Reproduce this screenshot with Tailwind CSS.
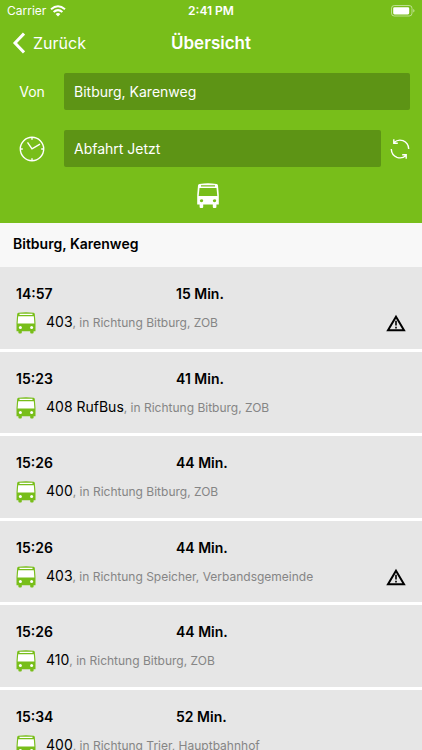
<!DOCTYPE html>
<html lang="de">
<head>
<meta charset="utf-8">
<meta name="viewport" content="width=device-width, initial-scale=1">
<title>Übersicht</title>
<script src="https://cdn.jsdelivr.net/npm/@tailwindcss/browser@4"></script>
</head>
<body class="flex h-screen flex-col overflow-hidden bg-white font-[Inter,'Liberation_Sans',sans-serif] text-black">
<svg class="hidden" aria-hidden="true">
  <symbol id="bus" viewBox="0 0 22 26">
    <path fill-rule="evenodd" fill="currentColor" d="M2.400 1Q11-.4 19.600 1Q20.900 1.200 21 2.400L21.800 12V21.600H19.400V24Q19.400 25 18.400 25H16.800Q15.800 25 15.800 24V21.600H6.200V24Q6.200 25 5.200 25H3.600Q2.600 25 2.600 24V21.600H.2V12L1 2.400Q1.100 1.200 2.400 1ZM4 2.200V3.500H18V2.200ZM2.500 5L1.700 13H20.300L19.500 5ZM4.500 16.200A1.700 1.500 0 1 0 4.510 19.200A1.700 1.500 0 1 0 4.500 16.200ZM17.500 16.200A1.700 1.500 0 1 0 17.510 19.200A1.700 1.500 0 1 0 17.500 16.200Z"/>
  </symbol>
  <symbol id="bus-line" viewBox="0 0 20 22">
    <path fill="#fff" d="M2 1H18L18.700 12H1.300Z"/>
    <path fill="currentColor" fill-rule="evenodd" d="M2.400.7Q10-.4 17.600.7Q18.700.9 18.800 2L19.500 11V19.200H17.600V20.500Q17.600 21.500 16.600 21.500H15.200Q14.200 21.500 14.200 20.500V19.200H5.800V20.500Q5.800 21.500 4.800 21.500H3.400Q2.400 21.500 2.400 20.500V19.200H.5V11L1.200 2Q1.300.9 2.400.7ZM3.500 1.800V3H16.500V1.800ZM2.200 4.200L1.600 11.400H18.400L17.800 4.200Z"/>
    <circle cx="4.400" cy="15.500" r="1.500" fill="#fff"/><circle cx="15.600" cy="15.500" r="1.500" fill="#fff"/>
  </symbol>
  <symbol id="warning" viewBox="0 0 20 18">
    <path d="M10 2.800L18 16.200H2Z" fill="none" stroke="currentColor" stroke-width="2"/>
    <path d="M10 6.800V11.600M10 12.800V14.600" stroke="currentColor" stroke-width="1.600"/>
  </symbol>
</svg>

<header class="shrink-0 bg-[#78be1a] text-white">
  <div class="grid h-[22px] grid-cols-3 items-center px-[7px] text-xs">
    <div class="flex items-center gap-1">
      <span>Carrier</span>
      <svg class="h-3 w-4" viewBox="0 0 16 12" fill="none" stroke="currentColor" stroke-width="2" aria-hidden="true"><path d="M1 4.200Q8-1.800 15 4.200M3.600 7Q8 3.200 12.400 7"/><path d="M5.600 9Q8 7 10.400 9L8 11.600Z" fill="currentColor" stroke="none"/></svg>
    </div>
    <span class="text-center font-semibold">2:41 PM</span>
    <svg class="h-3 w-[26px] justify-self-end" viewBox="0 0 26 12" aria-hidden="true"><rect x="2.500" y=".5" width="20.500" height="10.500" rx="2.800" fill="none" stroke="#fff" stroke-opacity=".5"/><rect x="4.200" y="2.200" width="16" height="7.200" rx="1.300" fill="#fff"/><path d="M24.300 4V7.600Q25.500 7 25.500 5.800T24.300 4Z" fill="#fff" fill-opacity=".6"/></svg>
  </div>
  <nav class="grid h-[42px] grid-cols-[1fr_auto_1fr] items-center px-3">
    <button type="button" class="flex items-center gap-2 text-base">
      <svg class="h-[22px] w-[13px]" viewBox="0 0 13 22" fill="none" stroke="currentColor" stroke-width="3" aria-hidden="true"><path d="M12 1.500L3 11L12 20.500"/></svg>
      Zurück
    </button>
    <h1 class="text-[17px] leading-6 font-semibold">Übersicht</h1>
  </nav>
  <form class="grid grid-cols-[64px_1fr] gap-y-5 pt-[9px] pb-[14px] text-sm">
    <label for="from" class="self-center text-center">Von</label>
    <div class="pr-3"><input id="from" type="text" value="Bitburg, Karenweg" class="block h-[37px] w-full rounded-xs bg-[#5d9415] px-[10px] pb-px text-white outline-none"></div>
    <label for="time" aria-label="Zeit" class="justify-self-center self-center">
      <svg class="size-[26px]" viewBox="0 0 26 26" fill="none" stroke="currentColor" stroke-width="1.400" aria-hidden="true"><circle cx="13" cy="13" r="11.700"/><path d="M13 1.500V3.800M13 22.200V24.500M1.500 13H3.800M22.200 13H24.500M8.500 6.300L13 12.800L21 8.200"/></svg>
    </label>
    <div class="flex items-center">
      <input id="time" type="text" value="Abfahrt Jetzt" class="block h-[37px] min-w-0 flex-1 rounded-xs bg-[#5d9415] px-[10px] pb-px text-white outline-none">
      <button type="button" aria-label="Aktualisieren" class="flex w-[41px] items-center justify-center pr-1">
        <svg class="size-5" viewBox="0 0 20 20" fill="none" stroke="currentColor" stroke-width="1.400" aria-hidden="true"><path d="M4 3.600Q8-.1 13 1.700Q18.500 3.900 18.700 10M16 16.400Q12 20.100 7 18.300Q1.500 16.100 1.300 10M3.800.3V4.200H7.800M16.200 19.700V15.800H12.200"/></svg>
      </button>
    </div>
    <button type="button" aria-label="Bus" class="col-span-2 justify-self-center pr-1.5"><svg class="-mt-1 h-[26px] w-[22px]" aria-hidden="true"><use href="#bus"/></svg></button>
  </form>
</header>

<main class="flex min-h-0 flex-1 flex-col">
  <h2 class="shrink-0 bg-[#f8f8f8] px-[13px] pt-2.5 pb-[13px] text-sm leading-[21px] font-semibold">Bitburg, Karenweg</h2>
  <ul class="flex min-h-0 flex-1 flex-col gap-[3px] overflow-y-auto [scrollbar-width:none] *:grid *:shrink-0 *:grid-cols-[160px_1fr_20px] *:gap-y-[7px] *:bg-[#e6e6e6] *:px-4 *:pt-[17px] *:odd:pb-[14px] *:even:pb-[13px]">
    <li>
      <time class="text-sm leading-5 font-semibold">14:57</time><strong class="col-span-2 text-sm leading-5 font-semibold">15 Min.</strong>
      <div class="col-span-2 flex items-center gap-2.5"><svg class="h-[22px] w-5 text-[#78be1a]" aria-hidden="true"><use href="#bus-line"/></svg><p class="text-xs leading-6 text-[#858585]"><span class="text-sm text-black">403</span>, in Richtung Bitburg, ZOB</p></div>
      <svg class="h-[18px] w-5 self-center" role="img" aria-label="Störung"><use href="#warning"/></svg>
    </li>
    <li>
      <time class="text-sm leading-5 font-semibold">15:23</time><strong class="col-span-2 text-sm leading-5 font-semibold">41 Min.</strong>
      <div class="col-span-2 flex items-center gap-2.5"><svg class="h-[22px] w-5 text-[#78be1a]" aria-hidden="true"><use href="#bus-line"/></svg><p class="text-xs leading-6 text-[#858585]"><span class="text-sm text-black">408 RufBus</span>, in Richtung Bitburg, ZOB</p></div>
    </li>
    <li>
      <time class="text-sm leading-5 font-semibold">15:26</time><strong class="col-span-2 text-sm leading-5 font-semibold">44 Min.</strong>
      <div class="col-span-2 flex items-center gap-2.5"><svg class="h-[22px] w-5 text-[#78be1a]" aria-hidden="true"><use href="#bus-line"/></svg><p class="text-xs leading-6 text-[#858585]"><span class="text-sm text-black">400</span>, in Richtung Bitburg, ZOB</p></div>
    </li>
    <li>
      <time class="text-sm leading-5 font-semibold">15:26</time><strong class="col-span-2 text-sm leading-5 font-semibold">44 Min.</strong>
      <div class="col-span-2 flex items-center gap-2.5"><svg class="h-[22px] w-5 text-[#78be1a]" aria-hidden="true"><use href="#bus-line"/></svg><p class="text-xs leading-6 text-[#858585]"><span class="text-sm text-black">403</span>, in Richtung Speicher, Verbandsgemeinde</p></div>
      <svg class="h-[18px] w-5 self-center" role="img" aria-label="Störung"><use href="#warning"/></svg>
    </li>
    <li>
      <time class="text-sm leading-5 font-semibold">15:26</time><strong class="col-span-2 text-sm leading-5 font-semibold">44 Min.</strong>
      <div class="col-span-2 flex items-center gap-2.5"><svg class="h-[22px] w-5 text-[#78be1a]" aria-hidden="true"><use href="#bus-line"/></svg><p class="text-xs leading-6 text-[#858585]"><span class="text-sm text-black">410</span>, in Richtung Bitburg, ZOB</p></div>
    </li>
    <li>
      <time class="text-sm leading-5 font-semibold">15:34</time><strong class="col-span-2 text-sm leading-5 font-semibold">52 Min.</strong>
      <div class="col-span-2 flex items-center gap-2.5"><svg class="h-[22px] w-5 text-[#78be1a]" aria-hidden="true"><use href="#bus-line"/></svg><p class="text-xs leading-6 text-[#858585]"><span class="text-sm text-black">400</span>, in Richtung Trier, Hauptbahnhof</p></div>
    </li>
  </ul>
</main>
</body>
</html>
